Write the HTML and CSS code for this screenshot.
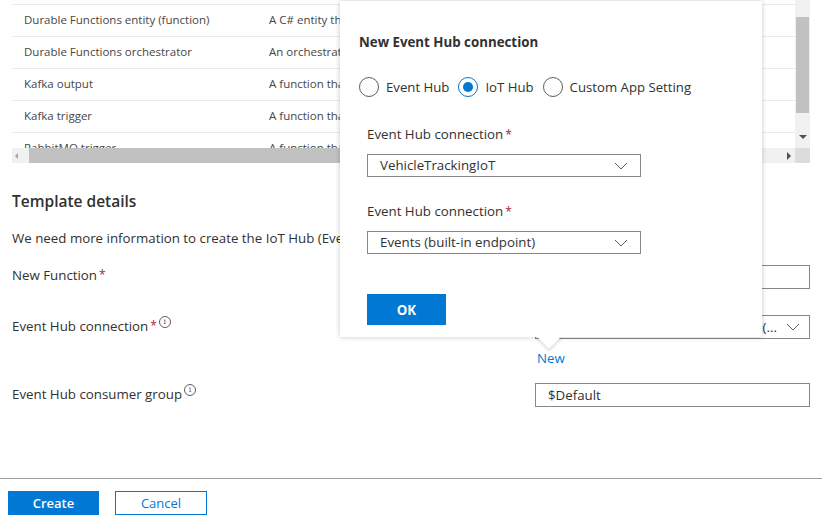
FILE: index.html
```html
<!DOCTYPE html>
<html>
<head>
<meta charset="utf-8">
<link rel="stylesheet" href="styles.css">
</head>
<body>
<div class="page">
  <div class="grid-area">
    <div class="grid-main">
      <div class="rows">
        <div class="row"><span class="c1">Durable Functions entity (function)</span><span class="c2">A C# entity that</span></div>
        <div class="row"><span class="c1">Durable Functions orchestrator</span><span class="c2">An orchestrator</span></div>
        <div class="row"><span class="c1">Kafka output</span><span class="c2">A function that</span></div>
        <div class="row"><span class="c1">Kafka trigger</span><span class="c2">A function that</span></div>
        <div class="row"><span class="c1">RabbitMQ trigger</span><span class="c2">A function that</span></div>
      </div>
      <div class="hscroll">
        <span class="arrow-left"></span>
        <span class="hthumb"></span>
        <span class="arrow-right"></span>
      </div>
    </div>
    <div class="vscroll">
      <div class="vtrack"><span class="vthumb"></span></div>
      <span class="arrow-down"></span>
      <div class="corner"></div>
    </div>
  </div>

  <section class="details">
    <h2 class="heading">Template details</h2>
    <p class="desc">We need more information to create the IoT Hub (Event Hub) trigger function.</p>

    <div class="field f-name">
      <label class="flabel">New Function<span class="req">*</span></label>
      <div class="fctl"><div class="input">IoTHub_EventHub1</div></div>
    </div>

    <div class="field f-conn">
      <label class="flabel">Event Hub connection<span class="req">*</span><span class="info">i</span></label>
      <div class="fctl">
        <div class="select"><span class="sel-text">VehicleTrackingIoT_events_IOTHUB&nbsp;&nbsp;&nbsp;&nbsp;(...</span><svg class="chev" width="14" height="8" viewBox="0 0 14 8"><path d="M1 1 L7 7 L13 1" fill="none" stroke="#605e5c" stroke-width="1"/></svg></div>
        <a class="newlink">New</a>
      </div>
    </div>

    <div class="field f-group">
      <label class="flabel">Event Hub consumer group<span class="info">i</span></label>
      <div class="fctl"><div class="input">$Default</div></div>
    </div>
  </section>

  <footer class="footer">
    <button class="btn primary">Create</button>
    <button class="btn secondary">Cancel</button>
  </footer>

  <div class="callout">
    <h3 class="c-title">New Event Hub connection</h3>
    <div class="radios">
      <label class="radio"><span class="circle"></span>Event Hub</label>
      <label class="radio"><span class="circle on"></span>IoT Hub</label>
      <label class="radio"><span class="circle"></span>Custom App Setting</label>
    </div>
    <div class="c-field c-first">
      <div class="c-label">Event Hub connection<span class="req">*</span></div>
      <div class="c-select"><span class="c-val">VehicleTrackingIoT</span><svg class="chev" width="14" height="8" viewBox="0 0 14 8"><path d="M1 1 L7 7 L13 1" fill="none" stroke="#605e5c" stroke-width="1"/></svg></div>
    </div>
    <div class="c-field c-second">
      <div class="c-label">Event Hub connection<span class="req">*</span></div>
      <div class="c-select"><span class="c-val">Events (built-in endpoint)</span><svg class="chev" width="14" height="8" viewBox="0 0 14 8"><path d="M1 1 L7 7 L13 1" fill="none" stroke="#605e5c" stroke-width="1"/></svg></div>
    </div>
    <button class="ok">OK</button>
    <span class="beak"></span>
  </div>
</div>
</body>
</html>
```

FILE: styles.css
```css
* { box-sizing: border-box; }
html, body { margin: 0; padding: 0; background: #fff; }
body {
  font-family: "Open Sans", "Noto Sans", sans-serif;
  color: #323130;
  width: 822px;
  height: 526px;
  overflow: hidden;
}
.page { position: relative; width: 822px; height: 526px; }

/* top grid */
.grid-area { display: flex; padding-left: 12px; height: 163px; }
.grid-main { width: 783px; display: flex; flex-direction: column; }
.rows { height: 148px; overflow: hidden; padding-top: 4px; }
.row {
  display: flex; align-items: center;
  height: 32px; border-bottom: 1px solid #edebe9; padding-bottom: 2px;
  font-size: 11.5px; color: #484644;
}
.row:first-child { border-top: 1px solid #edebe9; height: 33px; }
.c1 { width: 257px; padding-left: 12px; white-space: nowrap; }
.c2 { white-space: nowrap; }

.hscroll {
  height: 15px; background: #f1f1f1; display: flex; align-items: center;
  position: relative;
}
.arrow-left {
  width: 0; height: 0; margin-left: 3px;
  border-top: 3px solid transparent; border-bottom: 3px solid transparent;
  border-right: 3px solid #a3a3a3;
}
.hthumb { margin-left: 11px; width: 680px; height: 15px; background: #c1c1c1; }
.arrow-right {
  margin-left: auto; margin-right: 4px; width: 0; height: 0;
  border-top: 4px solid transparent; border-bottom: 4px solid transparent;
  border-left: 4px solid #505050;
}
.vscroll { width: 15px; display: flex; flex-direction: column; background: #f1f1f1; }
.vtrack { height: 130px; padding-top: 17px; display: flex; justify-content: center; }
.vthumb { width: 13px; height: 96px; background: #c1c1c1; }
.arrow-down {
  align-self: center; width: 0; height: 0; margin-top: 5px;
  border-left: 4px solid transparent; border-right: 4px solid transparent;
  border-top: 4px solid #505050;
}
.corner { margin-top: auto; height: 15px; background: #dcdcdc; }

/* details */
.details { padding: 0 12px; }
.heading {
  margin: 28px 0 0; font-size: 15.5px; font-weight: 600; line-height: 20px; color: #323130;
}
.desc { margin: 18px 0 0; font-size: 13.3px; line-height: 18px; color: #323130; white-space: nowrap; }
.field { display: flex; }
.flabel { width: 523px; font-size: 13.3px; line-height: 20px; color: #323130; display: flex; align-items: flex-start; }
.fctl { width: 275px; display: flex; flex-direction: column; }
.f-name { margin-top: 18px; }
.f-conn { margin-top: 26px; }
.f-group { margin-top: 16px; }
.f-conn .flabel, .f-group .flabel { padding-top: 1px; }
.req { color: #a4262c; margin-left: 2px; font-size: 12px; }
.info {
  display: inline-flex; align-items: center; justify-content: center;
  width: 12px; height: 12px; border: 1px solid #605e5c; border-radius: 50%;
  font-size: 8px; line-height: 1; color: #605e5c; margin-left: 2px; margin-top: 0px;
  font-family: "DejaVu Serif", serif;
}
.input, .select {
  height: 24px; border: 1px solid #8a8886; font-size: 13.3px; line-height: 22px;
  padding-left: 12px; white-space: nowrap; overflow: hidden; color: #323130;
}
.select { display: flex; align-items: center; justify-content: flex-end; padding-right: 9px; }
.sel-text { flex: none; white-space: nowrap; margin-right: 9px; }
.chev { flex: none; }
.newlink { margin-top: 10px; margin-left: 2px; font-size: 13.3px; line-height: 18px; color: #0078d4; }

/* footer */
.footer {
  position: absolute; left: 0; right: 0; top: 478px;
  border-top: 1px solid #a19f9d; padding: 12px 0 0 8px; display: flex; gap: 16px;
}
.btn {
  width: 92px; height: 24px; font-family: inherit; font-size: 13px; font-weight: 600;
  border-radius: 0; padding: 0; cursor: pointer;
}
.primary { background: #0078d4; border: 1px solid #0078d4; color: #fff; width: 91px; }
.secondary { background: #fff; border: 1px solid #0078d4; color: #0078d4; font-weight: 400; }

/* callout */
.callout {
  position: absolute; left: 340px; top: 1px; width: 422px; height: 336px;
  background: #fff; box-shadow: 0 0 5px rgba(0,0,0,0.22);
  padding: 31px 0 0 19px;
}
.c-title { margin: 0; font-size: 13.3px; font-weight: 700; line-height: 20px; color: #323130; }
.radios { display: flex; margin-top: 25px; height: 20px; align-items: center; }
.radio { display: flex; align-items: center; font-size: 13.2px; color: #323130; margin-right: 9px; }
.circle {
  width: 20px; height: 20px; border: 1px solid #605e5c; border-radius: 50%;
  margin-right: 7px; position: relative; background: #fff;
}
.circle.on { border-color: #0078d4; }
.circle.on::after {
  content: ""; position: absolute; left: 4px; top: 4px; width: 10px; height: 10px;
  border-radius: 50%; background: #0078d4;
}
.c-field { margin-left: 8px; }
.c-first { margin-top: 28px; }
.c-second { margin-top: 25px; }
.c-label { font-size: 13.3px; line-height: 18px; color: #323130; }
.c-select {
  margin-top: 10px; width: 274px; height: 23px; border: 1px solid #8a8886;
  display: flex; align-items: center; justify-content: space-between;
  padding: 0 12px; font-size: 13.3px; line-height: 21px; color: #323130;
}
.c-val { white-space: nowrap; }
.ok {
  margin: 40px 0 0 8px; width: 79px; height: 31px; background: #0078d4; border: 0;
  color: #fff; font-family: inherit; font-weight: 700; font-size: 13.3px; display: block;
}
.beak {
  position: absolute; left: 200px; top: 326px; width: 18px; height: 18px;
  background: #fff; transform: rotate(45deg);
  box-shadow: 2px 2px 3px rgba(0,0,0,0.12);
}
```
